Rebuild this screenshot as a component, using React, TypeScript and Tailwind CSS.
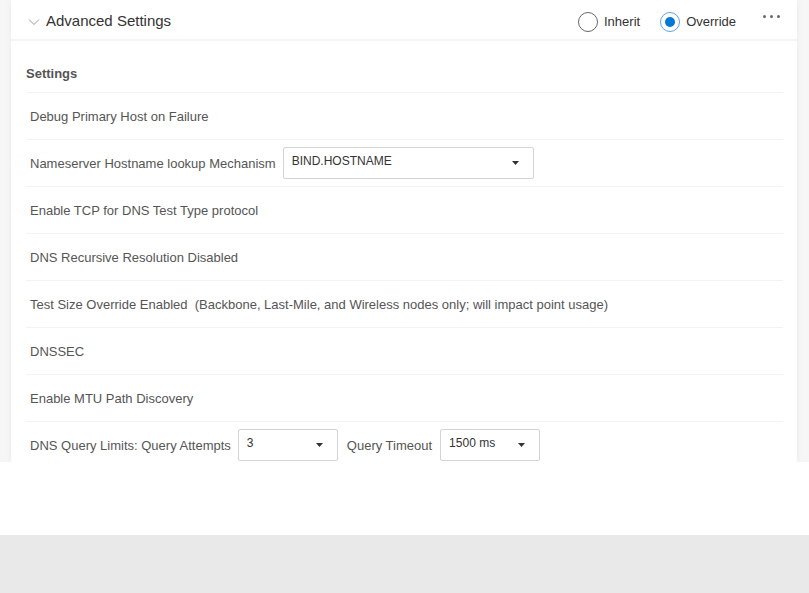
import React from "react";

function Caret() {
  return (
    <svg width="7" height="4" viewBox="0 0 7 4" className="shrink-0">
      <path d="M0 0 L7 0 L3.5 4 Z" fill="#333" />
    </svg>
  );
}

function Select({ value, width }: { value: string; width: string }) {
  return (
    <div
      className={`${width} h-[32px] -mt-[1px] border border-[#d4d4d4] rounded-[2px] bg-white flex items-center justify-between pl-[8px] pr-[14px] pb-[4px] text-[12px] text-[#333]`}
    >
      <span>{value}</span>
      <span className="pt-[3px]">
        <Caret />
      </span>
    </div>
  );
}

function Row({ children }: { children: React.ReactNode }) {
  return (
    <div className="h-[47px] border-b border-[#f2f2f2] flex items-center pl-[4px] pt-[1px] text-[13px] text-[#555]">
      {children}
    </div>
  );
}

export default function App() {
  return (
    <div
      className="w-full h-[593px] flex flex-col bg-white"
      style={{ fontFamily: '"Liberation Sans", Arial, sans-serif' }}
    >
      <div className="h-[462px] bg-[#f6f6f6] pl-[11px] pr-[12px] overflow-hidden">
        <div className="h-full bg-white shadow-[0_0_6px_rgba(0,0,0,0.05)] flex flex-col">
          <div className="h-[41px] shrink-0 border-b-2 border-[#f5f5f5] flex items-center pt-[4px] pl-[17px] pr-[17px]">
            <svg width="12" height="8" viewBox="0 0 12 8" className="mr-[6px] mt-[1px]">
              <path d="M1 1.5 L6 6.5 L11 1.5" fill="none" stroke="#999" strokeWidth="1" />
            </svg>
            <span className="text-[15px] text-[#333]">Advanced Settings</span>
            <div className="ml-auto flex items-center">
              <div className="w-[20px] h-[20px] rounded-full border border-[#666] bg-white" />
              <span className="ml-[6px] text-[13px] text-[#333]">Inherit</span>
              <div className="ml-[20px] w-[20px] h-[20px] rounded-full border border-[#5aa5e6] bg-white flex items-center justify-center">
                <div className="w-[10px] h-[10px] rounded-full bg-[#0078d4]" />
              </div>
              <span className="ml-[6px] text-[13px] text-[#333]">Override</span>
              <div className="ml-[27px] mb-[11px] flex gap-[4px]">
                <span className="w-[3px] h-[3px] rounded-full bg-[#666]" />
                <span className="w-[3px] h-[3px] rounded-full bg-[#666]" />
                <span className="w-[3px] h-[3px] rounded-full bg-[#666]" />
              </div>
            </div>
          </div>
          <div className="pl-[15px] pr-[14px] flex flex-col">
            <div className="h-[52px] border-b border-[#f2f2f2] pt-[23px] text-[13px] font-bold text-[#555]">
              Settings
            </div>
            <Row>Debug Primary Host on Failure</Row>
            <Row>
              <span>Nameserver Hostname lookup Mechanism</span>
              <div className="ml-[7px]">
                <Select value="BIND.HOSTNAME" width="w-[251px]" />
              </div>
            </Row>
            <Row>Enable TCP for DNS Test Type protocol</Row>
            <Row>DNS Recursive Resolution Disabled</Row>
            <Row>
              <span className="whitespace-pre">
                Test Size Override Enabled  (Backbone, Last-Mile, and Wireless nodes only; will impact point usage)
              </span>
            </Row>
            <Row>DNSSEC</Row>
            <Row>Enable MTU Path Discovery</Row>
            <Row>
              <span>DNS Query Limits: Query Attempts</span>
              <div className="ml-[7px]">
                <Select value="3" width="w-[100px]" />
              </div>
              <span className="ml-[9px]">Query Timeout</span>
              <div className="ml-[8px]">
                <Select value="1500 ms" width="w-[100px]" />
              </div>
            </Row>
          </div>
        </div>
      </div>
      <div className="h-[73px] bg-white" />
      <div className="flex-1 bg-[#e9e9e9]" />
    </div>
  );
}
